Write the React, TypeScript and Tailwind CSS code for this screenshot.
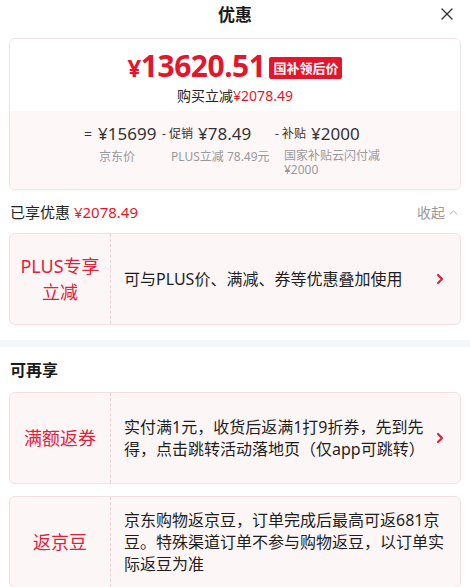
import { X, ChevronRight, ChevronUp } from 'lucide-react'

const FONT = { fontFamily: '"Noto Sans", "Noto Sans CJK SC", sans-serif' }

function OfferCard({ label, text, arrow = true }: {
  label: React.ReactNode
  text: string
  arrow?: boolean
}) {
  return (
    <div className="mx-[9px] flex h-[92px] rounded-md border border-[#f2dfe3] bg-[#fdf6f7]">
      <div className="flex w-[101px] shrink-0 items-center justify-center border-r border-dashed border-[#ecd3d8] px-2 text-center text-[18px] leading-[26px] text-[#e3203a]">
        {label}
      </div>
      <div className={`flex flex-1 items-center pl-[13px] text-[16px] leading-[22px] text-[#1e1e1e] ${arrow ? 'pr-[4px]' : 'pr-[10px]'}`}>
        {text}
      </div>
      {arrow && (
        <div className="flex w-[28px] shrink-0 items-center justify-start">
          <ChevronRight size={16} strokeWidth={3.2} className="text-[#e3203a]" />
        </div>
      )}
    </div>
  )
}

export default function App() {
  return (
    <div className="h-[587px] w-[470px] overflow-hidden bg-white" style={FONT}>
      <div className="relative flex h-[30px] items-center justify-center">
        <span className="text-[17px] font-bold text-[#1a1a1a]">优惠</span>
        <X size={20} strokeWidth={1.6} className="absolute right-[13px] top-[4px] text-[#333]" />
      </div>

      <div className="mx-[9px] mt-[8px] overflow-hidden rounded-md border border-[#f0e4e6] shadow-[0_1px_2px_rgba(0,0,0,0.04)]">
        <div className="flex h-[72px] flex-col items-center bg-white pt-[10px]">
          <div className="flex items-center gap-[4px]">
            <span className="text-[30px] font-bold leading-[34px] tracking-[-0.5px] text-[#e4162b]">
              <span className="text-[24px]">¥</span>13620.51
            </span>
            <span className="mt-[2px] rounded-[2px] bg-[#e4162b] px-[4px] text-[13px] font-bold leading-[22px] text-white">国补领后价</span>
          </div>
          <div className="mt-[2px] text-[14px] leading-[18px] text-[#222]">
            购买立减<span className="text-[#e4162b]">¥2078.49</span>
          </div>
        </div>
        <div className="flex h-[78px] bg-[#fdf7f8] pl-[74px] pt-[12px]">
          <div className="flex w-[78px] flex-col">
            <div className="flex items-center text-[17px] leading-[22px] text-[#333]">
              <span className="mr-[6px] text-[14px]">=</span>¥15699
            </div>
            <div className="ml-[15px] mt-[4px] text-[12px] leading-[15px] text-[#999]">京东价</div>
          </div>
          <div className="flex w-[113px] flex-col">
            <div className="flex items-center text-[17px] leading-[22px] text-[#333]">
              <span className="mr-[2px] text-[12px]">- 促销</span>
              <span className="ml-[3px]">¥78.49</span>
            </div>
            <div className="ml-[9px] mt-[4px] text-[12px] leading-[15px] text-[#999]">PLUS立减 78.49元</div>
          </div>
          <div className="flex flex-col">
            <div className="flex items-center text-[17px] leading-[22px] text-[#333]">
              <span className="mr-[2px] text-[12px]">- 补贴</span>
              <span className="ml-[3px]">¥2000</span>
            </div>
            <div className="ml-[9px] mt-[4px] w-[100px] text-[12px] leading-[14px] text-[#999]">国家补贴云闪付减¥2000</div>
          </div>
        </div>
      </div>

      <div className="mt-[10px] flex h-[24px] items-center justify-between px-[10px]">
        <div className="text-[15px] text-[#222]">
          已享优惠 <span className="text-[#e4162b]">¥2078.49</span>
        </div>
        <div className="flex items-center gap-[2px] text-[14px] text-[#999]">
          收起 <ChevronUp size={13} strokeWidth={1.5} />
        </div>
      </div>

      <div className="mt-[9px]">
        <OfferCard label={<>PLUS专享<br />立减</>} text="可与PLUS价、满减、券等优惠叠加使用" />
      </div>

      <div className="mt-[15px] h-[7px] bg-[#f5f6fa]" />

      <div className="flex h-[42px] items-center px-[10px] pt-[4px] text-[16px] font-bold text-[#1a1a1a]">可再享</div>

      <div className="mt-[3px] flex flex-col gap-[12px]">
        <OfferCard label="满额返券" text="实付满1元，收货后返满1打9折券，先到先得，点击跳转活动落地页（仅app可跳转）" />
        <OfferCard label="返京豆" text="京东购物返京豆，订单完成后最高可返681京豆。特殊渠道订单不参与购物返豆，以订单实际返豆为准" arrow={false} />
      </div>
    </div>
  )
}
